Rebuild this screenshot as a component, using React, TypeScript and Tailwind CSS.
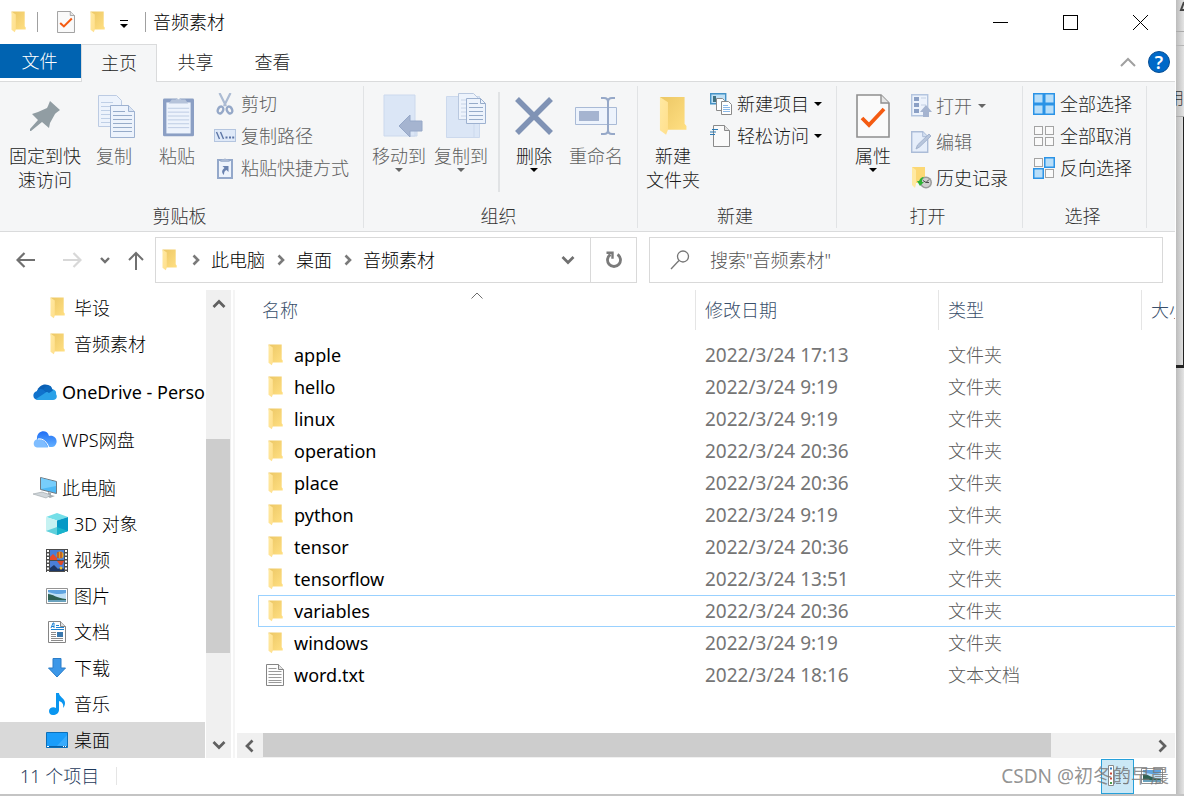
import React from 'react';

type IconProps = { className?: string };

const FolderIcon: React.FC<IconProps> = ({ className = 'w-[15px] h-[22px]' }) => (
  <svg className={className} viewBox="0 0 15 22" preserveAspectRatio="none" aria-hidden="true">
    <defs>
      <linearGradient id="folderBack" x1="0" y1="0" x2="1" y2="1">
        <stop offset="0" stopColor="#ecc765" />
        <stop offset="1" stopColor="#ffdf82" />
      </linearGradient>
      <linearGradient id="folderFront" x1="0" y1="0" x2="1" y2="1">
        <stop offset="0" stopColor="#ffe9a2" />
        <stop offset="1" stopColor="#ffdf8c" />
      </linearGradient>
    </defs>
    <path d="M0.5 0.5h13.2v14.8l1 1.2v2H4z" fill="url(#folderBack)" />
    <path d="M0.5 0.5l4.3 3v15l-1 2.8L0.5 18.8z" fill="url(#folderFront)" />
  </svg>
);

const CheckDocIcon: React.FC<IconProps> = ({ className }) => (
  <svg className={className} viewBox="0 0 34 44" preserveAspectRatio="none" fill="none" aria-hidden="true">
    <path d="M1 1h24l8 8v34H1z" fill="#fafafa" stroke="#8f8f8f" strokeWidth="1.6" />
    <path d="M25 1v8h8" fill="#e6e6e6" stroke="#8f8f8f" strokeWidth="1.4" />
    <path d="M6 24l7 7 15-16" stroke="#f45b12" strokeWidth="3.8" />
  </svg>
);

const PinIcon = () => (
  <svg className="w-8 h-8" viewBox="0 0 32 32" aria-hidden="true">
    <path d="M21 1l10 9-4 3-1 1-5 9 -1 5-7-6L2 31H1v-2l8-9-6-6 6-2 9-4 1-2z" fill="#919da3" />
  </svg>
);

const CopyIcon = () => (
  <svg className="ml-1 w-[37px] h-[43px]" viewBox="0 0 37 43" fill="none" aria-hidden="true">
    <path d="M0.500 0.500h18l5 5v26h-23z" fill="#edf3fc" stroke="#bccbe3" />
    <path d="M3 7.500h12M3 11.500h14M3 15.500h14M3 19.500h14M3 23.500h14M3 27.500h14" stroke="#bfcfe6" />
    <path d="M12.500 10.500h18l6 6v26h-24z" fill="#edf3fc" stroke="#9db1d0" />
    <path d="M30.500 10.500v6h6" fill="#dbe5f4" stroke="#9db1d0" />
    <path d="M15 16.500h12M15 20.500h19M15 24.500h19M15 28.500h19M15 32.500h19M15 36.500h19" stroke="#96abc9" />
  </svg>
);

const PasteIcon = () => (
  <svg className="ml-0.5 w-[31px] h-11" viewBox="0 0 32 44" fill="none" aria-hidden="true">
    <rect x="0" y="4" width="32" height="39" rx="1.5" fill="#8b9fc4" />
    <path d="M3.500 8h25v32h-25z" fill="#edf3fc" />
    <path d="M5 14h22M5 18h22M5 22h22M5 26h22M5 30h22M5 34h22" stroke="#bccbe3" />
    <path d="M6 9l3-4h4a3.3 3.3 0 0 1 6 0h4l3 4z" fill="#b5c3da" />
    <circle cx="16" cy="3.5" r="1.3" fill="#f5f6f7" />
  </svg>
);

const ScissorsIcon = () => (
  <svg className="w-[22px] h-[22px]" viewBox="0 0 22 22" fill="none" stroke="#95a8c8" aria-hidden="true">
    <path d="M5.5 0l6.5 13M16.500 0L10 13" strokeWidth="2.2" stroke="#acbbd3" />
    <ellipse cx="6.500" cy="17" rx="2.600" ry="3.600" transform="rotate(25 6.500 17)" strokeWidth="2.4" />
    <ellipse cx="15.500" cy="17" rx="2.600" ry="3.600" transform="rotate(-25 15.500 17)" strokeWidth="2.4" />
  </svg>
);

const CopyPathIcon = () => (
  <svg className="w-[22px] h-[14px]" viewBox="0 0 22 14" fill="none" aria-hidden="true">
    <rect x="0.5" y="0.5" width="21" height="12" fill="#dfe9f8" stroke="#b4c5df" />
    <path d="M2.500 3l3 7M6.500 3l3 7" stroke="#5c75a5" strokeWidth="1.4" />
    <path d="M11.500 8.500h2M15 8.500h2M18.200 8.500h2" stroke="#5c75a5" strokeWidth="2" />
  </svg>
);

const PasteShortcutIcon = () => (
  <svg className="w-4 h-[22px]" viewBox="0 0 16 22" fill="none" aria-hidden="true">
    <rect x="1" y="3" width="14" height="18" fill="#edf3fc" stroke="#94a8ca" strokeWidth="2" />
    <path d="M3 5l2-2.500h1.500a1.600 1.600 0 0 1 3 0H11L13 5z" fill="#a9b9d4" />
    <path d="M5.500 9h6v6l-2-2c-2 1-2.500 2-2.500 5-3-3-2-5 .5-7z" fill="#6a82af" />
  </svg>
);

const MoveToIcon = () => (
  <svg className="ml-2 w-10 h-11" viewBox="0 0 40 44" fill="none" aria-hidden="true">
    <path d="M28 25l6 3v14h-6z" fill="#dbe5f4" stroke="#ccd8ea" />
    <path d="M1 1h31v41H1z" fill="#dbe6f6" stroke="#ccd9ed" />
    <path d="M16 32l11-11v6h12v10H27v6z" fill="#a5b4d0" stroke="#96a8c8" />
  </svg>
);

const CopyToIcon = () => (
  <svg className="ml-2.5 w-10 h-[46px]" viewBox="0 0 40 46" fill="none" aria-hidden="true">
    <path d="M0.500 3.500h33v41h-33z" fill="#dbe6f6" stroke="#ccd9ed" />
    <path d="M28 30v14" stroke="#ccd9ed" />
    <path d="M12.500 0.500h15l4 4v22h-19z" fill="#edf3fc" stroke="#b9c8df" />
    <path d="M15 7h12M15 11h12M15 15h12M15 19h12M15 23h12" stroke="#c8d4e7" />
    <path d="M20.500 5.500h14l5 5v20h-19z" fill="#edf3fc" stroke="#9db1d0" />
    <path d="M34.500 5.500v5h5M23 10.500h9M23 14.500h14M23 18.500h14M23 22.500h14M23 26.500h14" stroke="#96abc9" />
  </svg>
);

const DeleteIcon = () => (
  <svg className="w-[38px] h-[38px]" viewBox="0 0 38 38" stroke="#8093b5" strokeWidth="5.500" aria-hidden="true">
    <path d="M2 2l34 34M36 2L2 36" />
  </svg>
);

const RenameIcon = () => (
  <svg className="w-[42px] h-[38px]" viewBox="0 0 42 38" fill="none" aria-hidden="true">
    <path d="M0.500 10.500h41v17h-41z" fill="#edf3fc" stroke="#a9bad6" />
    <path d="M4 14h20v10H4z" fill="#a5b4d0" />
    <path d="M26 1h3c3 0 4 2 4 4v28c0 3-1 4-4 4h-3M40 1h-3c-3 0-4 2-4 4v28c0 3 1 4 4 4h3" stroke="#96a8c8" strokeWidth="2" />
  </svg>
);

const NewItemIcon = () => (
  <svg className="w-[22px] h-[22px]" viewBox="0 0 22 22" fill="none" aria-hidden="true">
    <path d="M0.700 0.700h15v10h-15z" fill="#bfe0f5" stroke="#4592c6" strokeWidth="1.400" />
    <path d="M3 3h3v3l2 3H3z" fill="#3f7080" />
    <path d="M6.500 5.500h6l2 2v10h-8z" fill="#fff" stroke="#8a8a8a" />
    <path d="M11.500 8.500h7l3 3v10h-10z" fill="#fff" stroke="#8a8a8a" />
    <path d="M13 12.500h5M13 14.500h7M13 16.500h7M13 18.500h7" stroke="#8ab8e8" />
  </svg>
);

const EasyAccessIcon = () => (
  <svg className="w-[22px] h-[22px]" viewBox="0 0 22 22" fill="none" aria-hidden="true">
    <path d="M3.500 0.500h11l5 5v16h-16z" fill="#fafafa" stroke="#8a8a8a" />
    <path d="M14.500 0.500v5h5" fill="#e0e0e0" stroke="#8a8a8a" />
    <path d="M2 4.500h6M0 7h6M0 9.500h5" stroke="#2a7ab5" strokeWidth="1.200" />
  </svg>
);

const OpenIcon = () => (
  <svg className="w-[22px] h-[24px]" viewBox="0 0 22 24" fill="none" aria-hidden="true">
    <path d="M0.700 0.700h16v21h-16z" fill="#edf3fc" stroke="#b4c5df" strokeWidth="1.400" />
    <path d="M3 3h5v4H3zM3 9h5v4H3zM3 15h5v4H3z" fill="#8ba0c5" />
    <path d="M10 4h5M10 11h5" stroke="#c3d0e4" />
    <path d="M15 11l6 7h-3v5h-6v-5H9z" fill="#a5b4d0" />
  </svg>
);

const EditIcon = () => (
  <svg className="w-[22px] h-[22px]" viewBox="0 0 22 22" fill="none" aria-hidden="true">
    <path d="M0.700 0.700h11l5 5v15.600h-16z" fill="#e6eefa" stroke="#abbcd7" strokeWidth="1.400" />
    <path d="M11.700 0.700v5h5" fill="#d4e0f1" stroke="#abbcd7" />
    <path d="M5 18l1.500-4L18 3l2 2L8.500 16z" fill="#b8c6dc" stroke="#a3b3ce" />
  </svg>
);

const HistoryIcon = () => (
  <svg className="w-[22px] h-[22px]" viewBox="0 0 22 22" fill="none" aria-hidden="true">
    <path d="M1 0h13v16H4z" fill="#fcd875" />
    <path d="M1 0l4 3v14l-1 4-3-3z" fill="#ffe9a2" />
    <circle cx="15" cy="15.500" r="6" fill="#9b9b9b" />
    <circle cx="15" cy="15.500" r="4.500" fill="#cfcfcf" />
    <path d="M12 13.500l3 2 3-3M15 15.500h3" stroke="#4d4d4d" />
    <path d="M6 14h2c1-2 2-4 5-4-1 1-2 2-2 5h2l-4 4z" fill="#2fb136" />
  </svg>
);

const SelectIcon: React.FC<{ on: boolean[] }> = ({ on }) => (
  <svg className="w-[22px] h-[22px]" viewBox="0 0 22 22" aria-hidden="true">
    {on.map((active, i) => {
      const x = i % 2 ? 11 : 0;
      const y = i > 1 ? 11 : 0;
      return active ? (
        <rect key={i} x={x + 0.75} y={y + 0.75} width="9.500" height="9.500" fill="#b8def9" stroke="#2b93e6" strokeWidth="1.500" />
      ) : (
        <rect key={i} x={x + 1.5} y={y + 1.5} width="8" height="8" fill="#fafafa" stroke="#a3a3a3" />
      );
    })}
  </svg>
);

const OneDriveIcon = () => (
  <svg className="w-6 h-4" viewBox="0 0 24 16" aria-hidden="true">
    <path d="M4 7C6 1 13-2 18 3l2 4-8 4z" fill="#0a5fb4" />
    <path d="M5 16C-1 16-1 8 4 7c3-3 6-2 8 0l5 5-4 4z" fill="#1072cc" />
    <path d="M3 15L15 7c5-4 9 0 8 3 2 3 0 6-3 6H6c-1 0-2 0-3-1z" fill="#2aa1e8" />
    <path d="M10 5.500l6 3.500 4-2.500-2-4C16 0 12 2 10 5.500z" fill="#0c68bd" />
  </svg>
);

const WpsCloudIcon = () => (
  <svg className="w-6 h-[18px]" viewBox="0 0 24 18" aria-hidden="true">
    <defs>
      <linearGradient id="wpsCloud" x1="0" y1="0" x2="0" y2="1">
        <stop offset="0" stopColor="#1f6ef5" />
        <stop offset="1" stopColor="#63b0ff" />
      </linearGradient>
    </defs>
    <path d="M4 8C3 0 14-3 16 5c6-1 9 4 7 8-1 2-2 3-4 3H8z" fill="url(#wpsCloud)" />
    <path d="M4 16.500c-5-1-4-8 1-8.500 5-1 7 4 10 8.500z" fill="#7fbdff" />
    <path d="M5 8c5-1 9 3 11 8.500" stroke="#fff" fill="none" />
  </svg>
);

const ComputerIcon = () => (
  <svg className="w-6 h-[22px]" viewBox="0 0 24 22" aria-hidden="true">
    <path d="M7.500 0.500l16 4v12l-16-4z" fill="#4db8f5" stroke="#707a82" />
    <path d="M8 1l15 4v4L8 12z" fill="#77cdfb" />
    <path d="M15 15l3 1v2l4 1-5 2-5-3 3-1z" fill="#a8adb0" />
    <path d="M0 17l9-2 9 3-5 3z" fill="#d0d6da" stroke="#9aa2a8" strokeWidth="0.600" />
  </svg>
);

const CubeIcon = () => (
  <svg className="w-[22px] h-[22px]" viewBox="0 0 22 22" aria-hidden="true">
    <path d="M11 0l11 4-11 3.500L0 4z" fill="#74dfe8" />
    <path d="M0 4l11 3.500V22L0 18z" fill="#c6f2f2" />
    <path d="M22 4L11 7.500V22l11-4z" fill="#0699c6" />
    <path d="M0 18l11-4v8z" fill="#5fd0dc" />
    <path d="M22 18l-11-4v8z" fill="#18b3cb" />
  </svg>
);

const VideoIcon = () => (
  <svg className="w-[22px] h-[23px]" viewBox="0 0 22 23" aria-hidden="true">
    <path d="M0 0h22v23H0z" fill="#4c4c4c" />
    <path d="M4 1h14v10H4zM4 12h14v10H4z" fill="#4a7fd8" />
    <path d="M2 1v22M20 1v22" stroke="#fff" strokeWidth="2" strokeDasharray="2 1.500" />
    <circle cx="14" cy="6" r="3.500" fill="#e8a021" />
    <path d="M12 3v6M15 3v6" stroke="#a02b2b" />
    <path d="M4 8l3-3 4 4v2H4z" fill="#e84b2c" />
    <path d="M11 12h7l-2 4h-2z" fill="#df4a27" />
    <path d="M4 19l4-3 4 4 3-2 3 2v2H4z" fill="#1c3766" />
    <circle cx="15" cy="19" r="1.500" fill="#f2c02e" />
  </svg>
);

const PictureIcon = () => (
  <svg className="w-[22px] h-4" viewBox="0 0 22 16" aria-hidden="true">
    <path d="M0.500 0.500h21v15h-21z" fill="#fff" stroke="#949494" />
    <path d="M2 2h18v12H2z" fill="#bfe0f6" />
    <path d="M2 2h18v3c-6 2-12 1-18-1z" fill="#5fa3df" />
    <path d="M2 6c5 0 8 4 18 5v1H2z" fill="#2f6152" />
    <path d="M2 12h18v2H2z" fill="#6aa2bd" />
  </svg>
);

const DocumentIcon = () => (
  <svg className="w-[18px] h-[22px]" viewBox="0 0 18 22" fill="none" aria-hidden="true">
    <path d="M0.500 0.500h12l5 5v16h-17z" fill="#fff" stroke="#858585" />
    <path d="M12.500 0.500v5h5" fill="#ddd" stroke="#858585" />
    <path d="M3 7l2-5h1v5M4 5.500h2M8 4.500h3M8 6.500h8M3 8.500h13" stroke="#1e83d2" />
    <path d="M3 11.500h5M3 13.500h5M3 15.500h5M3 17.500h12M3 19.500h12" stroke="#8c8c8c" />
    <path d="M9 11h6v5H9z" fill="#3a78ad" />
  </svg>
);

const DownloadIcon = () => (
  <svg className="w-[18px] h-5" viewBox="0 0 18 20" aria-hidden="true">
    <path d="M5 0.500h8V10h4.500L9 19 0.500 10H5z" fill="#3c97e8" stroke="#2a7dc8" />
  </svg>
);

const MusicIcon = () => (
  <svg className="w-4 h-[22px]" viewBox="0 0 16 22" aria-hidden="true">
    <path d="M7 0h3c0 4 6 5 6 10 0 2-1 4-2 5 1-4-1-6-4-7v9c0 3-3 5-6 5s-4-2-4-4c0-3 4-5 7-3z" fill="#0a96f0" />
  </svg>
);

const DesktopIcon = () => (
  <svg className="w-[22px] h-4" viewBox="0 0 22 16" aria-hidden="true">
    <path d="M0.500 0.500h21v15h-21z" fill="#1a9dfa" stroke="#0c6fb8" />
    <path d="M10 15L21 3v12z" fill="#38abfc" />
    <path d="M1 14.500h20" stroke="#0b5fa3" />
    <path d="M1 14.500h2M17 14.500h1M19 14.500h1" stroke="#fff" />
  </svg>
);

const TextFileIcon = () => (
  <svg className="w-[18px] h-[22px]" viewBox="0 0 18 22" fill="none" aria-hidden="true">
    <path d="M0.500 0.500h12l5 5v16h-17z" fill="#fdfdfd" stroke="#858585" />
    <path d="M12.500 0.500v5h5" fill="#e2e2e2" stroke="#858585" />
    <path d="M2.500 4.500h8M2.500 7.500h13M2.500 10.500h13M2.500 13.500h13M2.500 16.500h13M2.500 18.500h13" stroke="#9a9a9a" />
  </svg>
);

const DetailsViewIcon = () => (
  <svg className="w-[22px] h-[22px]" viewBox="0 0 22 22" fill="none" aria-hidden="true">
    <path d="M1.500 0.500h5v20h-5z" fill="#fff" stroke="#8a8a8a" />
    <path d="M3 3.500h2" stroke="#2f7dc4" strokeWidth="2" />
    <path d="M3 8.500h2M3 13.500h2" stroke="#c44a3a" strokeWidth="2" />
    <path d="M3 18h2" stroke="#4a9a4a" strokeWidth="2" />
    <path d="M9 3.500h5M16 3.500h5M9 8.500h5M16 8.500h5M9 13.500h5M16 13.500h5M9 18.500h5M16 18.500h5" stroke="#7d8b94" />
  </svg>
);

const Chevron: React.FC<{ dir: 'up' | 'down' | 'left' | 'right'; className?: string }> = ({ dir, className = 'text-[#606060]' }) => {
  const paths = {
    up: 'M1.500 10L7 4.500l5.500 5.500',
    down: 'M1.500 4L7 9.500 12.500 4',
    left: 'M9.500 1.500L4 7l5.500 5.500',
    right: 'M4.500 1.500L10 7l-5.500 5.500',
  };
  return (
    <svg className={`w-3.5 h-3.5 ${className}`} viewBox="0 0 14 14" fill="none" stroke="currentColor" strokeWidth="2.700" aria-hidden="true">
      <path d={paths[dir]} />
    </svg>
  );
};

const Caret: React.FC<IconProps> = ({ className = '' }) => (
  <svg className={`w-2 h-1 ${className}`} viewBox="0 0 8 4" fill="currentColor" aria-hidden="true">
    <path d="M0 0h8L4 4z" />
  </svg>
);

const BigButton: React.FC<{
  icon: React.ReactNode;
  lines: string[];
  className: string;
  muted?: boolean;
  menu?: boolean;
}> = ({ icon, lines, className, muted, menu }) => (
  <button type="button" className={`flex shrink-0 flex-col items-center self-start ${muted ? 'text-[#606060]' : 'text-[#1a1a1a]'} ${className}`}>
    <span className="flex h-14 items-center">{icon}</span>
    {lines.map((line) => (
      <span key={line} className="h-6 leading-6 whitespace-nowrap">{line}</span>
    ))}
    {menu && <Caret className={muted ? 'text-[#666]' : 'text-black'} />}
  </button>
);

const SmallButton: React.FC<{
  icon: React.ReactNode;
  label: string;
  muted?: boolean;
  menu?: boolean;
  tall?: boolean;
}> = ({ icon, label, muted, menu, tall }) => (
  <button
    type="button"
    className={`flex items-center whitespace-nowrap ${tall ? 'h-9 gap-[3px]' : 'h-8 gap-[5px]'} ${muted ? 'text-[#606060]' : 'text-[#1a1a1a]'}`}
  >
    <span className="flex w-[22px] justify-center">{icon}</span>
    {label}
    {menu && <Caret className={muted ? 'text-[#666] ml-[3px]' : 'text-black'} />}
  </button>
);

const RibbonGroup: React.FC<{ title: string; className: string; children: React.ReactNode }> = ({ title, className, children }) => (
  <div className={`flex shrink-0 flex-col border-r border-[#e1e3e5] pt-0.5 ${className}`}>
    <div className="flex h-[116px]">{children}</div>
    <div className="h-6 pr-1 text-center leading-6 text-[#333]">{title}</div>
  </div>
);

const navGroups = [
  [
    { icon: <FolderIcon />, label: '毕设', nested: true },
    { icon: <FolderIcon />, label: '音频素材', nested: true },
  ],
  [{ icon: <OneDriveIcon />, label: 'OneDrive - Personal', nested: false }],
  [{ icon: <WpsCloudIcon />, label: 'WPS网盘', nested: false }],
  [
    { icon: <ComputerIcon />, label: '此电脑', nested: false },
    { icon: <CubeIcon />, label: '3D 对象', nested: true },
    { icon: <VideoIcon />, label: '视频', nested: true },
    { icon: <PictureIcon />, label: '图片', nested: true },
    { icon: <DocumentIcon />, label: '文档', nested: true },
    { icon: <DownloadIcon />, label: '下载', nested: true },
    { icon: <MusicIcon />, label: '音乐', nested: true },
    { icon: <DesktopIcon />, label: '桌面', nested: true, selected: true },
  ],
];

const files = [
  { name: 'apple', date: '2022/3/24 17:13', type: '文件夹' },
  { name: 'hello', date: '2022/3/24 9:19', type: '文件夹' },
  { name: 'linux', date: '2022/3/24 9:19', type: '文件夹' },
  { name: 'operation', date: '2022/3/24 20:36', type: '文件夹' },
  { name: 'place', date: '2022/3/24 20:36', type: '文件夹' },
  { name: 'python', date: '2022/3/24 9:19', type: '文件夹' },
  { name: 'tensor', date: '2022/3/24 20:36', type: '文件夹' },
  { name: 'tensorflow', date: '2022/3/24 13:51', type: '文件夹' },
  { name: 'variables', date: '2022/3/24 20:36', type: '文件夹', focused: true },
  { name: 'windows', date: '2022/3/24 9:19', type: '文件夹' },
  { name: 'word.txt', date: '2022/3/24 18:16', type: '文本文档' },
];

const TitleBar = () => (
  <header className="flex h-11 items-center pl-[11px]">
    <FolderIcon />
    <span className="ml-[11px] h-5 w-px bg-[#a0a0a0]" />
    <button type="button" aria-label="属性" className="ml-[19px]">
      <CheckDocIcon className="h-[22px] w-[18px]" />
    </button>
    <button type="button" aria-label="新建文件夹" className="ml-[15px]">
      <FolderIcon />
    </button>
    <button type="button" aria-label="自定义快速访问工具栏" className="ml-[15px] flex flex-col items-center gap-[3px] pt-1">
      <span className="h-px w-2 bg-black" />
      <Caret />
    </button>
    <span className="ml-[17px] h-5 w-px bg-[#a0a0a0]" />
    <h1 className="ml-[7px] text-black">音频素材</h1>
    <div className="ml-auto flex">
      <button type="button" aria-label="最小化" className="flex h-[43px] w-[70px] items-center justify-center">
        <span className="h-px w-[15px] bg-black" />
      </button>
      <button type="button" aria-label="最大化" className="flex h-[43px] w-[70px] items-center justify-center">
        <span className="size-[15px] border border-black" />
      </button>
      <button type="button" aria-label="关闭" className="flex h-[43px] w-[70px] items-center justify-center">
        <svg className="size-[15px]" viewBox="0 0 15 15" stroke="#000" aria-hidden="true">
          <path d="M0 0l15 15M15 0L0 15" />
        </svg>
      </button>
    </div>
  </header>
);

const Tabs = () => (
  <nav className="flex h-[38px] border-b border-[#dadbdc] text-[#222]">
    <button type="button" className="h-[34px] w-[81px] bg-[#0063b1] pr-0.5 text-white">文件</button>
    <button type="button" className="-mb-px w-[76px] border border-b-0 border-[#dadbdc] bg-[#f5f6f7] pb-0.5">主页</button>
    <button type="button" className="w-[77px] pb-0.5">共享</button>
    <button type="button" className="w-[77px] pb-0.5">查看</button>
    <div className="ml-auto flex items-center pr-[5px] pb-0.5">
      <button type="button" aria-label="最小化功能区">
        <svg className="h-[10px] w-4" viewBox="0 0 16 10" fill="none" stroke="#a0a0a0" strokeWidth="2" aria-hidden="true">
          <path d="M1 9l7-7 7 7" />
        </svg>
      </button>
      <button
        type="button"
        aria-label="帮助"
        className="ml-3 size-[22px] rounded-full border border-[#0a4f94] bg-[#0069c8] text-center text-[18px] leading-5 font-semibold text-white"
      >
        ?
      </button>
    </div>
  </nav>
);

const Ribbon = () => (
  <div className="flex overflow-hidden border-b border-[#dadbdc] bg-[#f5f6f7] pt-1 pb-[3px]">
    <RibbonGroup title="剪贴板" className="w-[364px]">
      <BigButton icon={<PinIcon />} lines={['固定到快', '速访问']} className="ml-2 w-[74px]" />
      <BigButton icon={<CopyIcon />} lines={['复制']} className="w-16" muted />
      <BigButton icon={<PasteIcon />} lines={['粘贴']} className="w-[62px]" muted />
      <div className="ml-1.5">
        <SmallButton icon={<ScissorsIcon />} label="剪切" muted />
        <SmallButton icon={<CopyPathIcon />} label="复制路径" muted />
        <SmallButton icon={<PasteShortcutIcon />} label="粘贴快捷方式" muted />
      </div>
    </RibbonGroup>
    <RibbonGroup title="组织" className="w-[274px]">
      <BigButton icon={<MoveToIcon />} lines={['移动到']} className="ml-1 w-[62px]" muted menu />
      <BigButton icon={<CopyToIcon />} lines={['复制到']} className="w-[62px]" muted menu />
      <span className="mt-1 mr-[3px] ml-1.5 h-[100px] w-0.5 bg-[#e1e3e5]" />
      <BigButton icon={<DeleteIcon />} lines={['删除']} className="w-[62px]" menu />
      <BigButton icon={<RenameIcon />} lines={['重命名']} className="w-[62px]" muted />
    </RibbonGroup>
    <RibbonGroup title="新建" className="w-[199px]">
      <BigButton icon={<FolderIcon className="h-10 w-7" />} lines={['新建', '文件夹']} className="ml-[3px] w-16" />
      <div className="ml-[5px]">
        <SmallButton icon={<NewItemIcon />} label="新建项目" menu />
        <SmallButton icon={<EasyAccessIcon />} label="轻松访问" menu />
      </div>
    </RibbonGroup>
    <RibbonGroup title="打开" className="w-[186px]">
      <BigButton icon={<CheckDocIcon className="h-11 w-[34px]" />} lines={['属性']} className="w-[72px]" menu />
      <div className="ml-0.5">
        <SmallButton icon={<OpenIcon />} label="打开" muted menu tall />
        <SmallButton icon={<EditIcon />} label="编辑" muted tall />
        <SmallButton icon={<HistoryIcon />} label="历史记录" tall />
      </div>
    </RibbonGroup>
    <RibbonGroup title="选择" className="w-[124px]">
      <div className="ml-2.5">
        <SmallButton icon={<SelectIcon on={[true, true, true, true]} />} label="全部选择" />
        <SmallButton icon={<SelectIcon on={[false, false, false, false]} />} label="全部取消" />
        <SmallButton icon={<SelectIcon on={[false, true, true, false]} />} label="反向选择" />
      </div>
    </RibbonGroup>
  </div>
);

const AddressBar = () => (
  <div className="flex items-center pt-[5px] pr-3 pb-[7px]">
    <div className="flex w-[155px] shrink-0 items-center pl-4">
      <button type="button" aria-label="返回">
        <svg className="h-4 w-5" viewBox="0 0 20 16" fill="none" stroke="#707070" strokeWidth="2.200" aria-hidden="true">
          <path d="M19 8H2M8.500 1l-7 7 7 7" />
        </svg>
      </button>
      <button type="button" aria-label="前进" className="ml-[26px]">
        <svg className="h-4 w-5" viewBox="0 0 20 16" fill="none" stroke="#d8d8d8" strokeWidth="2.200" aria-hidden="true">
          <path d="M1 8h17M11.500 1l7 7-7 7" />
        </svg>
      </button>
      <button type="button" aria-label="最近浏览的位置" className="ml-[18px]">
        <svg className="h-2 w-[10px]" viewBox="0 0 10 8" fill="none" stroke="#707070" strokeWidth="2.400" aria-hidden="true">
          <path d="M1 2l4 4 4-4" />
        </svg>
      </button>
      <button type="button" aria-label="上移" className="ml-[17px]">
        <svg className="h-[19px] w-[18px]" viewBox="0 0 18 19" fill="none" stroke="#707070" strokeWidth="2" aria-hidden="true">
          <path d="M9 19V2M2 9l7-7 7 7" />
        </svg>
      </button>
    </div>
    <div className="flex h-[46px] flex-1 items-center border border-[#d9d9d9] pl-1.5 text-black">
      <FolderIcon />
      {['此电脑', '桌面', '音频素材'].map((part, index) => (
        <React.Fragment key={part}>
          <svg
            className={`mr-[11px] h-3 w-2 ${index === 0 ? 'ml-[15px]' : 'ml-3'}`}
            viewBox="0 0 8 12"
            fill="none"
            stroke="#7a7a7a"
            strokeWidth="2.600"
            aria-hidden="true"
          >
            <path d="M1.500 1.500L6 6l-4.500 4.500" />
          </svg>
          <button type="button">{part}</button>
        </React.Fragment>
      ))}
      <button type="button" aria-label="以前的位置" className="mr-[15px] ml-auto">
        <Chevron dir="down" className="text-[#707070]" />
      </button>
      <button type="button" aria-label="刷新" className="flex h-full w-[46px] items-center justify-center border-l border-[#d9d9d9]">
        <svg className="size-[18px]" viewBox="0 0 18 18" fill="none" stroke="#7a7a7a" strokeWidth="2.800" aria-hidden="true">
          <path d="M12.500 3.500a6.500 6.500 0 1 1-7 0" />
          <path d="M1.500 1.800h6v6" strokeWidth="2.400" />
        </svg>
      </button>
    </div>
    <label className="ml-3 flex h-[46px] w-[514px] shrink-0 items-center border border-[#d9d9d9] pl-5">
      <svg className="size-5" viewBox="0 0 20 20" fill="none" stroke="#767676" strokeWidth="1.300" aria-hidden="true">
        <circle cx="13" cy="6.500" r="5.500" />
        <path d="M9 10.500L1 19" />
      </svg>
      <input
        type="text"
        aria-label="搜索"
        placeholder={'搜索"音频素材"'}
        className="ml-5 min-w-0 flex-1 font-light outline-none placeholder:text-[#555]"
      />
    </label>
  </div>
);

const Sidebar = () => (
  <aside className="flex w-[231px] shrink-0">
    <div className="flex flex-1 flex-col gap-3 overflow-hidden text-black">
      {navGroups.map((group, i) => (
        <ul key={i}>
          {group.map((item) => (
            <li
              key={item.label}
              className={`flex h-9 items-center whitespace-nowrap ${item.nested ? 'pl-[45px]' : 'pl-[33px]'} ${
                'selected' in item ? 'bg-[#d9d9d9]' : ''
              } ${item.label.startsWith('OneDrive') ? 'font-normal' : ''}`}
            >
              <span className="mr-[5px] flex w-6 shrink-0 justify-center">{item.icon}</span>
              {item.label}
            </li>
          ))}
        </ul>
      ))}
    </div>
    <div className="ml-px flex w-[25px] flex-col items-center bg-[#f0f0f0]">
      <span className="flex h-7 items-center"><Chevron dir="up" /></span>
      <span className="mt-[121px] h-[214px] w-full border-r border-[#f0f0f0] bg-[#cdcdcd]" />
      <span className="mt-auto flex h-[26px] items-center"><Chevron dir="down" /></span>
    </div>
  </aside>
);

const FileList = () => (
  <section className="ml-0.5 flex min-w-0 flex-1 flex-col border-l-2 border-[#f5f5f5]">
    <div className="overflow-hidden pl-[23px]">
      <table className="w-full table-fixed border-separate border-spacing-0 text-left">
        <colgroup>
          <col />
          <col className="w-[243px]" />
          <col className="w-[203px]" />
          <col className="w-[33px]" />
        </colgroup>
        <thead className="text-[#3a4f6b]">
          <tr className="h-10">
            <th className="relative border-r border-[#e5e5e5] p-0 pl-1 font-light">
              名称
              <svg className="absolute top-0.5 left-1/2 h-[7px] w-3 -translate-x-1/2" viewBox="0 0 12 7" fill="none" stroke="#6d6d6d" aria-hidden="true">
                <path d="M0.500 6.500L6 1l5.500 5.500" />
              </svg>
            </th>
            <th className="border-r border-[#e5e5e5] p-0 pl-[9px] font-light">修改日期</th>
            <th className="border-r border-[#e5e5e5] p-0 pl-[9px] font-light">类型</th>
            <th className="overflow-hidden p-0 pl-[9px] font-light whitespace-nowrap">大小</th>
          </tr>
        </thead>
        <tbody className="text-[#5c5c5c] before:block before:h-[9px]">
          {files.map((file) => {
            const line = file.focused ? 'border-[#99d1ff]' : 'border-transparent';
            return (
              <tr key={file.name} className="h-8">
                <td className={`border-y border-l p-0 pl-[7px] font-normal text-black ${line}`}>
                  <span className="flex items-center gap-2.5">
                    <span className="flex w-[18px] justify-center">
                      {file.name.endsWith('.txt') ? <TextFileIcon /> : <FolderIcon />}
                    </span>
                    {file.name}
                  </span>
                </td>
                <td className={`border-y p-0 pl-[9px] text-[19px] leading-6 font-normal text-[#757575] ${line}`}>{file.date}</td>
                <td className={`border-y p-0 pl-[9px] ${line}`}>{file.type}</td>
                <td className={`border-y p-0 ${line}`} />
              </tr>
            );
          })}
        </tbody>
      </table>
    </div>
    <div className="mt-auto ml-0.5 flex h-[25px] items-center bg-[#f0f0f0]">
      <span className="flex w-[26px] justify-center"><Chevron dir="left" /></span>
      <span className="mr-[97px] h-full flex-1 border-b border-[#f0f0f0] bg-[#cdcdcd]" />
      <span className="flex w-[27px] justify-center"><Chevron dir="right" /></span>
    </div>
  </section>
);

const StatusBar = () => (
  <footer className="relative flex h-9 items-center pl-5 text-[#1e395b]">
    11 个项目
    <span className="ml-[17px] h-[18px] w-px bg-[#e5e5e5]" />
    <div className="ml-auto flex items-center pr-3">
      <button type="button" aria-label="详细信息" className="flex h-[35px] w-[33px] items-center justify-center border border-[#26a0da] bg-[#cbe8f6]">
        <DetailsViewIcon />
      </button>
      <button type="button" aria-label="大图标" className="ml-[7px]">
        <PictureIcon />
      </button>
    </div>
    <span className="pointer-events-none absolute right-1.5 text-[19px] font-normal whitespace-nowrap text-[#777]/80">CSDN @初冬的早晨</span>
  </footer>
);

// Sliver of the window that sits behind the explorer
const BackgroundWindow = () => (
  <div className="flex w-2 shrink-0 flex-col overflow-hidden bg-gradient-to-r from-[#bcbcbc] to-[#e4e4e4]">
    <div className="h-8 border-b border-[#aaa]">
      <svg className="h-3 w-2" viewBox="0 0 8 12" fill="none" stroke="#444" strokeWidth="2" aria-hidden="true">
        <path d="M8 2L5 10h3" />
      </svg>
    </div>
    <div className="h-[14px] border-b border-[#b5b5b5]" />
    <div className="flex h-[71px] items-end border-b border-[#aaa] pb-1.5">
      <span className="-ml-2 text-[16px] text-[#333]">用</span>
    </div>
    <div className="h-[251px] border-r border-b-[3px] border-[#222]" />
  </div>
);

const App: React.FC = () => {
  return (
    <div className="flex min-h-screen overflow-hidden bg-[#c4c4c4] pb-0.5 font-['Noto_Sans','Noto_Sans_CJK_SC',sans-serif] text-[18px] leading-6 font-light">
      <div className="flex min-w-0 flex-1 flex-col border-r border-white bg-white">
        <TitleBar />
        <Tabs />
        <Ribbon />
        <AddressBar />
        <main className="flex flex-1">
          <Sidebar />
          <FileList />
        </main>
        <StatusBar />
      </div>
      <BackgroundWindow />
    </div>
  );
};

export default App;
